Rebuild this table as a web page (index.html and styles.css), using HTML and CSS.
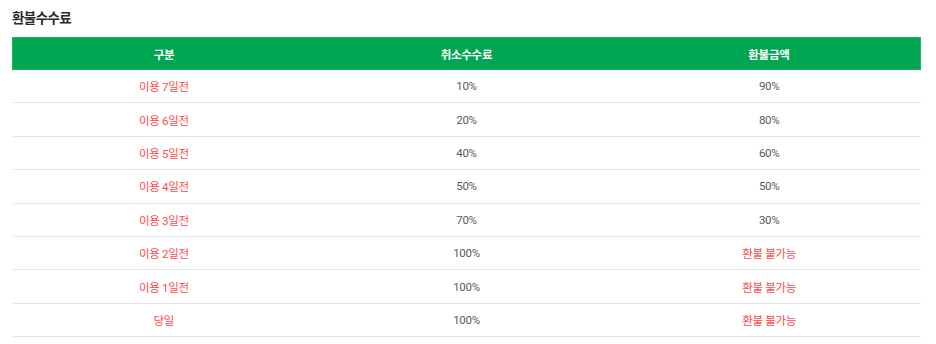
FILE: index.html
```html
<!DOCTYPE html>
<html lang="ko">
<head>
<meta charset="utf-8">
<link rel="stylesheet" href="styles.css">
</head>
<body>
<div class="wrap">
  <h3 class="title">환불수수료</h3>
  <table class="fee">
    <thead>
      <tr><th>구분</th><th>취소수수료</th><th>환불금액</th></tr>
    </thead>
    <tbody>
      <tr><td class="red">이용 7일전</td><td>10%</td><td>90%</td></tr>
      <tr><td class="red">이용 6일전</td><td>20%</td><td>80%</td></tr>
      <tr><td class="red">이용 5일전</td><td>40%</td><td>60%</td></tr>
      <tr><td class="red">이용 4일전</td><td>50%</td><td>50%</td></tr>
      <tr><td class="red">이용 3일전</td><td>70%</td><td>30%</td></tr>
      <tr><td class="red">이용 2일전</td><td>100%</td><td class="red">환불 불가능</td></tr>
      <tr><td class="red">이용 1일전</td><td>100%</td><td class="red">환불 불가능</td></tr>
      <tr><td class="red">당일</td><td>100%</td><td class="red">환불 불가능</td></tr>
    </tbody>
  </table>
</div>
</body>
</html>
```
FILE: styles.css
```css
html, body {
  margin: 0;
  padding: 0;
  background: #fff;
}
body {
  font-family: Roboto, "Noto Sans CJK KR", sans-serif;
}
.wrap {
  padding: 8px 15px 0 12px;
}
.title {
  margin: 0 0 9px 0;
  font-size: 13.5px;
  line-height: 20px;
  font-weight: 700;
  color: #2a2a2a;
  letter-spacing: -0.6px;
}
.fee {
  width: 909px;
  border-collapse: collapse;
  table-layout: fixed;
}
.fee th {
  background: #00a651;
  color: #fff;
  font-size: 11.5px;
  font-weight: 700;
  height: 31px;
  padding: 0;
  text-align: center;
  border: 1px solid #20b162;
  border-left: 0;
  border-right: 0;
  letter-spacing: -0.3px;
}
.fee th:first-child { border-left: 1px solid #20b162; }
.fee th:last-child { border-right: 1px solid #20b162; }
.fee td {
  height: 32.4px;
  padding: 0;
  text-align: center;
  font-size: 11.5px;
  color: #5a5a5a;
  border-bottom: 1px solid #e3e3e3;
  letter-spacing: -0.3px;
}
.fee td.red {
  color: #ff4a4a;
}
```
